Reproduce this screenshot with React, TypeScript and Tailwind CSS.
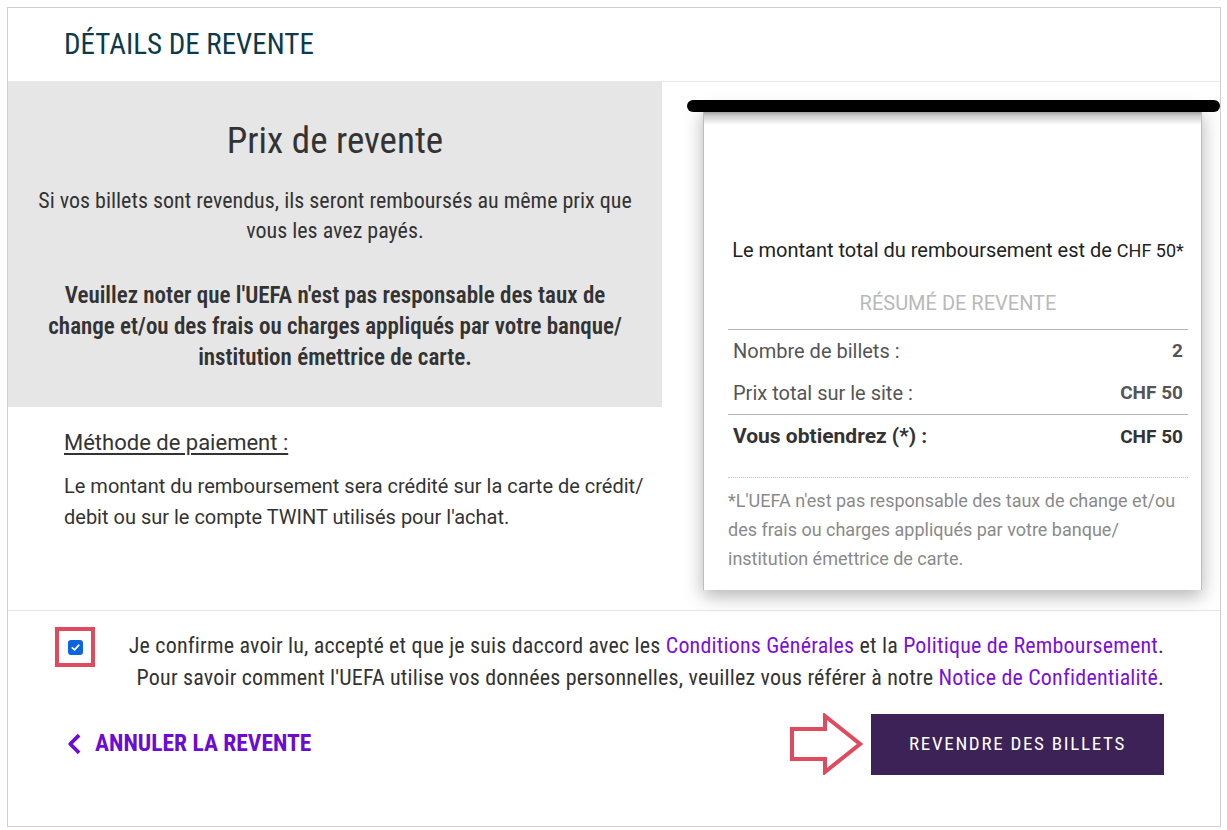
import { ChevronLeft } from "lucide-react";

type Row = { label: string; value: string };

const rows: Row[] = [
  { label: "Nombre de billets :", value: "2" },
  { label: "Prix total sur le site :", value: "CHF 50" },
];

function Receipt() {
  return (
    <div className="flex flex-col pb-[20px] pl-[25px] pt-[18px]">
      <div className="relative z-10 h-[12px] rounded-full bg-black" />
      <div className="-mt-[5px] ml-[16px] mr-[18px] flex h-[483px] flex-col border-x border-[#bdbdbd] bg-white shadow-[0_6px_18px_rgba(0,0,0,0.3)]">
        <div className="h-[18px] bg-gradient-to-b from-[#6f6f6f] via-[#d0d0d0] to-white" />
        <div className="flex flex-1 flex-col pl-[24px] pr-[13px] pt-[113px]">
          <p className="text-center text-[20px] leading-[24px] text-[#222]">
            Le montant total du remboursement est de <span className="text-[18px]">CHF 50*</span>
          </p>
          <p className="mt-[28px] text-center text-[20px] leading-[24px] uppercase text-[#b9b9b9]">Résumé de revente</p>
          <div className="mt-[14px] border-t border-[#b3b3b3] px-[5px]">
            {rows.map((r) => (
              <div key={r.label} className="flex h-[42px] items-center justify-between text-[20px] text-[#555]">
                <span>{r.label}</span>
                <span className="text-[19px] font-bold">{r.value}</span>
              </div>
            ))}
          </div>
          <div className="border-t border-[#b3b3b3] px-[5px]">
            <div className="flex h-[44px] items-center justify-between font-bold text-[#333]">
              <span className="text-[21px]">Vous obtiendrez (*) :</span>
              <span className="text-[19px]">CHF 50</span>
            </div>
          </div>
          <div className="mt-[18px] border-t border-dotted border-[#c4c4c4] pt-[8px] text-[18px] leading-[29px] text-[#8a8a8a]">
            *L'UEFA n'est pas responsable des taux de change et/ou des frais ou charges appliqués par votre banque/ institution émettrice de carte.
          </div>
        </div>
      </div>
    </div>
  );
}

export default function App() {
  return (
    <div className="min-h-screen bg-white pl-[7px] pt-[7px] font-['Roboto',sans-serif] text-[#333]">
      <div className="w-[1214px] border border-[#cfcfcf]">
        <header className="flex h-[74px] items-center border-b border-[#e8e8e8] pl-[56px]">
          <h1 className="text-[29px] uppercase text-[#0c3a4a] [font-stretch:condensed]">Détails de revente</h1>
        </header>

        <div className="grid grid-cols-[654px_1fr]">
          <div>
            <section className="flex h-[325px] flex-col items-center bg-[#e6e6e6] px-[24px] pt-[38px] text-center [font-stretch:condensed]">
              <h2 className="text-[37px] leading-[42px] text-[#333]">Prix de revente</h2>
              <p className="mt-[24px] text-[22px] leading-[30px]">
                Si vos billets sont revendus, ils seront remboursés au même prix que vous les avez payés.
              </p>
              <p className="mt-[34px] text-[23px] font-semibold leading-[31px]">
                Veuillez noter que l'UEFA n'est pas responsable des taux de change et/ou des frais ou charges appliqués par votre banque/ institution émettrice de carte.
              </p>
            </section>
            <section className="pl-[56px] pr-[14px] pt-[23px]">
              <h3 className="text-[22px] leading-[26px] underline underline-offset-[3px]">Méthode de paiement :</h3>
              <p className="mt-[15px] text-[20px] leading-[31px]">
                Le montant du remboursement sera crédité sur la carte de crédit/ debit ou sur le compte TWINT utilisés pour l'achat.
              </p>
            </section>
          </div>
          <Receipt />
        </div>

        <footer className="border-t border-[#e6e6e6] pb-[51px] pl-[47px] pr-[56px] pt-[16px]">
          <div className="flex items-start">
            <div className="flex h-[40px] w-[40px] shrink-0 items-center justify-center border-[4px] border-[#e04a5f]">
              <span className="flex h-[15px] w-[15px] items-center justify-center rounded-[3px] bg-[#0b64e0]">
                <svg viewBox="0 0 12 12" className="h-[11px] w-[11px]">
                  <path d="M2.5 6.3 5 8.6 9.6 3.4" fill="none" stroke="white" strokeWidth="1.8" strokeLinecap="round" strokeLinejoin="round" />
                </svg>
              </span>
            </div>
            <p className="mt-[3px] flex-1 text-right text-[22px] leading-[32px] tracking-[0.18px] text-[#333] [font-stretch:condensed]">
              Je confirme avoir lu, accepté et que je suis daccord avec les{" "}
              <span className="text-[#7b10d8]">Conditions Générales</span> et la{" "}
              <span className="text-[#7b10d8]">Politique de Remboursement</span>.
              <br />
              Pour savoir comment l'UEFA utilise vos données personnelles, veuillez vous référer à notre{" "}
              <span className="text-[#7b10d8]">Notice de Confidentialité</span>.
            </p>
          </div>

          <div className="mt-[19px] flex items-center justify-between">
            <a className="ml-[12px] flex items-center gap-[14px] text-[23.5px] font-bold uppercase text-[#6c0bd3] [font-stretch:condensed]">
              <ChevronLeft className="-mx-[8px] h-[30px] w-[30px]" strokeWidth={3} strokeLinecap="square" />
              Annuler la revente
            </a>
            <div className="flex items-center gap-[8px]">
              <svg viewBox="0 0 74 62" className="h-[62px] w-[74px]">
                <polygon points="3,16 36,16 36,3 71,31 36,59 36,46 3,46" fill="none" stroke="#e04a5f" strokeWidth="4" strokeLinejoin="miter" />
              </svg>
              <button className="h-[61px] w-[293px] bg-[#3d2257] text-[19px] uppercase tracking-[1.7px] text-white [font-stretch:condensed]">
                Revendre des billets
              </button>
            </div>
          </div>
        </footer>
      </div>
    </div>
  );
}
